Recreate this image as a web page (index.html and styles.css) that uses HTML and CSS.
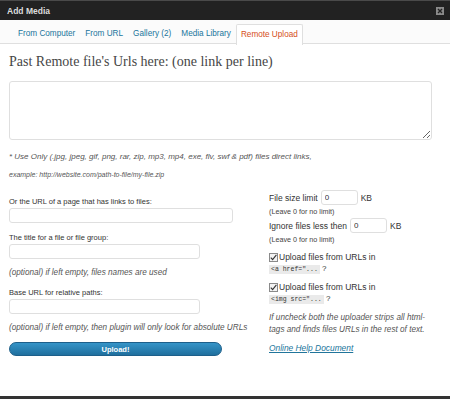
FILE: index.html
```html
<!DOCTYPE html>
<html lang="en">
<head>
  <meta charset="UTF-8" />
  <title>Add Media</title>
  <link rel="stylesheet" href="styles.css">
</head>
<body>
  <div class="modal">
    <div class="modal-head">
      <span class="modal-title">Add Media</span>
      <span class="modal-close">
        <svg width="8" height="8" viewBox="0 0 8 8"><path d="M2 2 L6 6 M6 2 L2 6" stroke="#222" stroke-width="1.4"/></svg>
      </span>
    </div>

    <ul class="tabs">
      <li><a href="#">From Computer</a></li>
      <li><a href="#">From URL</a></li>
      <li><a href="#">Gallery (2)</a></li>
      <li><a href="#">Media Library</a></li>
      <li class="current"><a href="#">Remote Upload</a></li>
    </ul>

    <form class="content">
      <h3>Past Remote file's Urls here: (one link per line)</h3>
      <textarea class="urls"></textarea>
      <p class="note note-first">* Use Only (.jpg, jpeg, gif, png, rar, zip, mp3, mp4, exe, flv, swf &amp; pdf) files direct links,</p>
      <p class="note">example: http://website.com/path-to-file/my-file.zip</p>

      <div class="columns">
        <div class="col-left">
          <label class="lbl">Or the URL of a page that has links to files:</label>
          <input type="text" class="txt txt-wide">

          <label class="lbl">The title for a file or file group:</label>
          <input type="text" class="txt">
          <p class="note hint">(optional) if left empty, files names are used</p>

          <label class="lbl">Base URL for relative paths:</label>
          <input type="text" class="txt">
          <p class="note hint">(optional) if left empty, then plugin will only look for absolute URLs</p>

          <button type="button" class="btn-upload">Upload!</button>
        </div>

        <div class="col-right">
          <div class="limit-row">
            <span>File size limit</span>
            <input type="text" class="num" value="0">
            <span>KB</span>
          </div>
          <p class="small">(Leave 0 for no limit)</p>
          <div class="limit-row">
            <span>Ignore files less then</span>
            <input type="text" class="num" value="0">
            <span>KB</span>
          </div>
          <p class="small">(Leave 0 for no limit)</p>

          <div class="check-row">
            <span class="check"><svg width="9" height="9" viewBox="0 0 9 9"><path d="M1.8 4.6 L3.6 6.6 L7.4 1.8" fill="none" stroke="#333" stroke-width="1.1"/></svg></span>
            Upload files from URLs in
          </div>
          <div class="code-row"><code>&lt;a href="...</code> ?</div>

          <div class="check-row">
            <span class="check"><svg width="9" height="9" viewBox="0 0 9 9"><path d="M1.8 4.6 L3.6 6.6 L7.4 1.8" fill="none" stroke="#333" stroke-width="1.1"/></svg></span>
            Upload files from URLs in
          </div>
          <div class="code-row"><code>&lt;img src="...</code> ?</div>

          <p class="note explain">If uncheck both the uploader strips all html-tags and finds files URLs in the rest of text.</p>
          <a href="#" class="help">Online Help Document</a>
        </div>
      </div>
    </form>
    <div class="modal-foot"></div>
  </div>
</body>
</html>
```

FILE: styles.css
```css
body {
  margin: 0;
  padding: 0;
  background: #fff;
  font-family: "Liberation Sans", Arial, sans-serif;
  color: #333;
}
.modal {
  width: 450px;
  height: 399px;
  display: flex;
  flex-direction: column;
  overflow: hidden;
}
.modal-head {
  height: 19px;
  background: #222;
  border-top: 1px solid #4a4a4a;
  display: flex;
  align-items: center;
  justify-content: space-between;
  padding: 0 6px 0 7px;
}
.modal-title {
  font-size: 8.5px;
  font-weight: bold;
  color: #ddd;
}
.modal-close {
  width: 8px;
  height: 8px;
  background: #8a8a8a;
  display: flex;
  margin-top: 1px;
}
.tabs {
  list-style: none;
  margin: 0;
  padding: 4px 0 0 13px;
  height: 19px;
  display: flex;
  border-bottom: 1px solid #dfdfdf;
  background: #fbfbfb;
}
.tabs li {
  padding: 0 5px;
  line-height: 19px;
  font-size: 8.2px;
}
.tabs a {
  color: #21759b;
  text-decoration: none;
}
.tabs .current {
  background: #fff;
  border: 1px solid #dfdfdf;
  border-bottom: none;
  border-radius: 2px 2px 0 0;
  margin-bottom: -1px;
  height: 20px;
  line-height: 19px;
  padding: 0 4px;
}
.tabs .current a {
  color: #d54e21;
}
.content {
  flex: 1;
  padding: 10px 18px 0 9px;
}
h3 {
  margin: 0;
  font-family: "Liberation Serif", Georgia, serif;
  font-weight: normal;
  font-size: 14px;
  line-height: 16px;
  color: #464646;
}
.urls {
  display: block;
  width: 423px;
  height: 59px;
  margin-top: 11px;
  box-sizing: border-box;
  border: 1px solid #dfdfdf;
  border-radius: 3px;
  resize: vertical;
}
.note {
  margin: 8px 0 0;
  font-size: 7px;
  line-height: 10px;
  font-style: italic;
  color: #555;
}
.note-first {
  margin-top: 12px;
  font-size: 8px;
}
.columns {
  display: flex;
  margin-top: 8px;
}
.col-left {
  width: 250px;
  flex: none;
  margin-right: 10px;
}
.col-right {
  width: 165px;
  flex: none;
}
.lbl {
  display: block;
  margin-top: 10px;
  font-size: 7.5px;
  line-height: 10px;
  color: #333;
}
.col-left .lbl:first-child {
  margin-top: 9px;
}
.txt {
  display: block;
  width: 191px;
  height: 15px;
  margin-top: 1px;
  box-sizing: border-box;
  border: 1px solid #dfdfdf;
  border-radius: 3px;
  background: #fff;
}
.txt-wide {
  width: 224px;
}
.hint {
  margin-top: 9px;
  font-size: 8.2px;
}
.btn-upload {
  display: block;
  width: 213px;
  height: 14px;
  margin-top: 9px;
  padding: 0;
  border: 1px solid #1d5f8a;
  border-radius: 7px;
  background: linear-gradient(#3594c8, #1f6f9e);
  color: #fff;
  font-family: "Liberation Sans", Arial, sans-serif;
  font-size: 7.5px;
  font-weight: bold;
  cursor: pointer;
}
.limit-row {
  display: flex;
  align-items: center;
  gap: 3px;
  height: 15px;
  margin-top: 2px;
  font-size: 8.5px;
  color: #333;
}
.num {
  width: 37px;
  height: 15px;
  box-sizing: border-box;
  border: 1px solid #dfdfdf;
  border-radius: 3px;
  padding: 0 3px;
  font-family: "Liberation Sans", Arial, sans-serif;
  font-size: 8px;
  color: #333;
}
.small {
  margin: 3px 0 0;
  font-size: 7.2px;
  line-height: 8px;
  color: #444;
}
.check-row {
  display: flex;
  align-items: center;
  height: 10px;
  margin-top: 8px;
  font-size: 8.5px;
  color: #333;
}
.check {
  width: 9px;
  height: 9px;
  box-sizing: border-box;
  border: 1px solid #8a8a8a;
  background: #f3f3f3;
  display: flex;
  align-items: center;
  justify-content: center;
  margin-right: 1px;
}
.check svg {
  flex: none;
}
.code-row {
  margin-top: 2px;
  height: 10px;
  line-height: 10px;
  font-size: 8px;
  color: #333;
}
code {
  font-family: "Liberation Mono", "Courier New", monospace;
  font-size: 6.5px;
  background: #eaeaea;
  padding: 1px 2px;
}
.explain {
  margin-top: 8px;
  font-size: 8.2px;
  line-height: 12px;
}
.help {
  display: block;
  margin-top: 7px;
  font-size: 8.4px;
  line-height: 10px;
  font-style: italic;
  color: #21759b;
}
.modal-foot {
  height: 3px;
  background: #333;
}
```
